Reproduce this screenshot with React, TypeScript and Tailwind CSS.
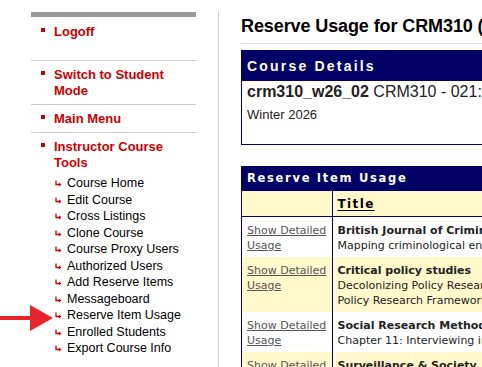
import React from 'react'

const navy = 'bg-[#000066]'

const topLinks = [
  { label: ['Logoff'], cls: 'pt-[7px] pb-[20px]' },
  { label: ['Switch to Student', 'Mode'], cls: 'pt-[6px] pb-[5px]' },
  { label: ['Main Menu'], cls: 'pt-[6px] pb-[5px]' },
]

const toolLinks = [
  'Course Home',
  'Edit Course',
  'Cross Listings',
  'Clone Course',
  'Course Proxy Users',
  'Authorized Users',
  'Add Reserve Items',
  'Messageboard',
  'Reserve Item Usage',
  'Enrolled Students',
  'Export Course Info',
]

const usageRows = [
  { title: 'British Journal of Criminology', lines: ['Mapping criminological engagement within and beyond the academy'] },
  { title: 'Critical policy studies', lines: ['Decolonizing Policy Research: Indigenous Perspectives on', 'Policy Research Frameworks and Practice'] },
  { title: 'Social Research Methods', lines: ['Chapter 11: Interviewing in qualitative research'] },
  { title: 'Surveillance & Society', lines: ['Surveillance studies and the everyday'] },
]

const SubArrow = () => (
  <svg width="7" height="7" viewBox="0 0 7 7" className="shrink-0 mt-[5px]">
    <path d="M1 0.5 V4.5 H5" stroke="#cc0000" strokeWidth="1.3" fill="none" />
    <path d="M4 2.5 L6.5 4.5 L4 6.5 Z" fill="#cc0000" />
  </svg>
)

const Sidebar = () => (
  <div className="w-[219px] shrink-0 mt-[11px] border-r border-[#cccccc] h-[356px]">
    <div className="ml-[31px] w-[165px] pt-[1px] font-['Liberation_Sans',Arial,sans-serif]">
      <div className="h-[5px] bg-[#999999]" />
      {topLinks.map((item) => (
        <div key={item.label[0]} className={`border-b border-[#cccccc] ${item.cls}`}>
          <div className="flex items-start pl-[10px]">
            <span className="w-[4px] h-[4px] bg-[#cc0000] mt-[4px] shrink-0" />
            <span className="ml-[9px] text-[13px] leading-[16px] font-bold text-[#cc0000]">
              {item.label.map((l) => (
                <div key={l}>{l}</div>
              ))}
            </span>
          </div>
        </div>
      ))}
      <div className="pt-[6px]">
        <div className="flex items-start pl-[10px]">
          <span className="w-[4px] h-[4px] bg-[#cc0000] mt-[4px] shrink-0" />
          <span className="ml-[9px] text-[13px] leading-[16px] font-bold text-[#cc0000]">
            <div>Instructor Course</div>
            <div>Tools</div>
          </span>
        </div>
        <ul className="mt-[4px] pl-[24px]">
          {toolLinks.map((t) => (
            <li key={t} className="flex items-start gap-[5px] text-[12.5px] leading-[16.5px] text-black">
              <SubArrow />
              <span>{t}</span>
            </li>
          ))}
        </ul>
      </div>
    </div>
  </div>
)

const CourseDetails = () => (
  <div className="w-[600px] mt-[6px] border border-[#000066] font-['Liberation_Sans',Arial,sans-serif]">
    <div className={`${navy} h-[30px] flex items-center pl-[5px] text-white font-bold text-[14px] tracking-[2.2px]`}>
      Course Details
    </div>
    <div className="h-[63px] pl-[5px] pt-[2px]">
      <div className="text-[16px] leading-[18px] text-[#222] whitespace-nowrap">
        <b>crm310_w26_02</b> CRM310 - 021: Criminology Research Methods
      </div>
      <div className="mt-[6px] text-[13px] leading-[16px] text-[#222]">Winter 2026</div>
    </div>
  </div>
)

const ReserveUsage = () => (
  <div className="w-[600px] mt-[21px] border-l border-t border-[#000066] font-['DejaVu_Sans',Verdana,sans-serif]">
    <div className={`${navy} h-[24px] flex items-center pl-[5px] text-white font-bold text-[11.5px] tracking-[1.7px]`}>
      Reserve Item Usage
    </div>
    <table className="table-fixed border-collapse w-full text-[11px] leading-[15px]">
      <colgroup>
        <col className="w-[90px]" />
        <col />
      </colgroup>
      <thead>
        <tr className="bg-[#fff9cc] h-[25px] border-b border-[#000066]">
          <th />
          <th className="border-l border-[#000066] text-left pl-[5px] pt-[2px] font-bold text-[12px] tracking-[1.4px] text-black">
            <span className="underline underline-offset-2">Title</span>
          </th>
        </tr>
      </thead>
      <tbody>
        {usageRows.map((r, i) => (
          <tr key={r.title} className={i % 2 === 1 ? 'bg-[#fff9cc]' : 'bg-white'}>
            <td className="align-top pl-[5px] pt-[6px] pb-[4px]">
              <a className="text-[#555555] underline">
                Show Detailed
                <br />
                Usage
              </a>
            </td>
            <td className="align-top border-l border-[#000066] pl-[5px] pt-[6px] pb-[4px] whitespace-nowrap text-[#222]">
              <div className="font-bold">{r.title}</div>
              {r.lines.map((l) => (
                <div key={l}>{l}</div>
              ))}
            </td>
          </tr>
        ))}
      </tbody>
    </table>
  </div>
)

export default function App() {
  return (
    <div className="relative flex h-[367px] w-[482px] overflow-hidden bg-white">
      <Sidebar />
      <div className="flex-1 min-w-0 overflow-hidden pl-[22px]">
        <div className="mt-[15px] pb-[6px] border-b border-[#dddddd] w-[600px]">
          <h1 className="text-[18px] leading-[22px] font-bold tracking-[-0.1px] text-black whitespace-nowrap font-['Liberation_Sans',Arial,sans-serif]">
            Reserve Usage for CRM310 (Winter 2026)
          </h1>
        </div>
        <CourseDetails />
        <ReserveUsage />
      </div>
      {/* annotation arrow pointing to the current page link */}
      <svg className="absolute left-0 top-[304px]" width="54" height="28" viewBox="0 0 54 28">
        <rect x="0" y="12" width="32" height="4" fill="#e8242a" />
        <path d="M30 1 L53 14 L30 27 Z" fill="#e8242a" />
      </svg>
    </div>
  )
}
